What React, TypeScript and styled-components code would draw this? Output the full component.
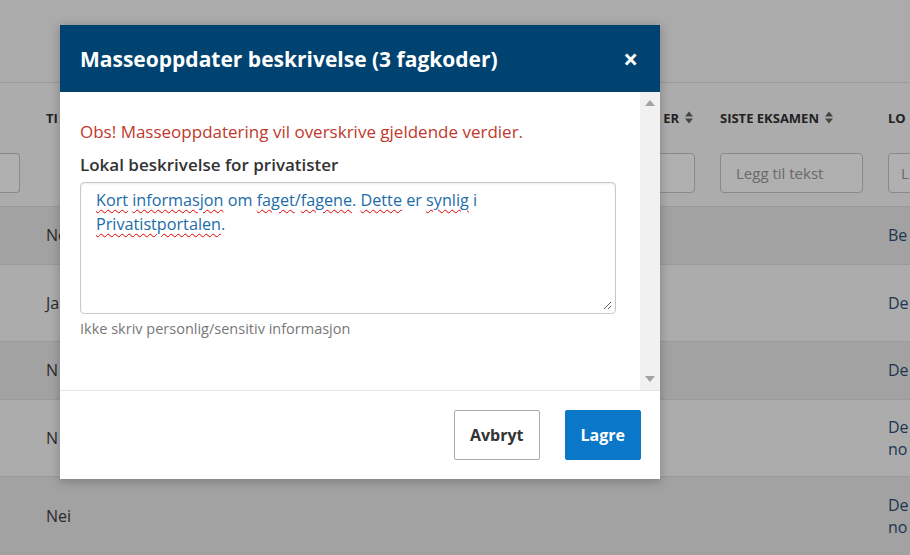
import React from "react";
import styled, { createGlobalStyle } from "styled-components";

const G = createGlobalStyle`
  html,body{margin:0;padding:0;background:#acacac;font-family:"Open Sans",sans-serif;}
  #root{width:910px;height:555px;overflow:hidden;position:relative;}
`;

const Page = styled.div`display:flex;flex-direction:column;width:910px;height:555px;`;
const Top = styled.div`height:82px;border-bottom:1px solid #9c9c9c;background:#ababab;`;
const Head = styled.div`height:123px;display:grid;grid-template-columns:45px 650px 25px 168px 1fr;grid-template-rows:70px 53px;`;
const HCell = styled.div<{ $pad?: number }>`
  font-size:13px;font-weight:700;color:#222;display:flex;align-items:center;padding-left:${p => p.$pad ?? 0}px;gap:6px;
`;
const FCell = styled.div<{ $end?: boolean }>`display:flex;align-items:flex-start;justify-content:${p => (p.$end ? "flex-end" : "flex-start")};`;
const Filter = styled.div<{ $w: number }>`
  width:${p => p.$w}px;height:40px;border:1px solid #8a8a8a;border-radius:4px;background:#b0b0b0;color:#6a6a6a;font-size:15px;font-weight:400;display:flex;align-items:center;padding-left:15px;box-sizing:border-box;white-space:nowrap;overflow:hidden;
`;
const Row = styled.div<{ $h: number; $dark: boolean }>`
  height:${p => p.$h}px;background:${p => (p.$dark ? "#a2a2a2" : "#acacac")};border-top:1px solid #9a9a9a;
  display:grid;grid-template-columns:45px 843px 1fr;align-items:center;font-size:16px;color:#2a2a2a;
`;
const Blue = styled.div`color:#1d3550;line-height:22px;`;

const Modal = styled.div`
  position:absolute;left:60px;top:25px;width:600px;height:454px;background:#fff;display:flex;flex-direction:column;
  box-shadow:0 2px 10px rgba(0,0,0,.25);
`;
const MHead = styled.div`
  height:67px;background:#004370;color:#fff;display:flex;align-items:center;justify-content:space-between;padding:0 22px 0 20px;
  font-size:21px;font-weight:700;
`;
const Close = styled.span`font-size:26px;font-weight:700;line-height:1;`;
const MBody = styled.div`flex:1;display:flex;border-bottom:1px solid #e5e5e5;`;
const Content = styled.div`flex:1;padding:28px 24px 0 20px;`;
const Scroll = styled.div`width:20px;background:#f1f1f1;display:flex;flex-direction:column;justify-content:space-between;align-items:center;padding:8px 0;box-sizing:border-box;`;
const Arrow = styled.div<{ $up: boolean }>`
  width:0;height:0;border-left:5px solid transparent;border-right:5px solid transparent;
  ${p => (p.$up ? "border-bottom:6px solid #a3a3a3;" : "border-top:6px solid #a3a3a3;")}
`;
const Warn = styled.div`color:#c0392b;font-size:17px;`;
const Label = styled.div`color:#333;font-size:17px;font-weight:600;margin-top:10px;`;
const Area = styled.div`
  margin-top:6px;height:132px;border:1px solid #c9c9c9;border-radius:4px;box-sizing:border-box;padding:5px 15px;position:relative;
  color:#1b6ca8;font-size:16.2px;line-height:24px;box-shadow:inset 0 1px 2px rgba(0,0,0,.08);
`;
const Sp = styled.span`text-decoration:underline wavy #e00000;text-decoration-thickness:1px;text-underline-offset:3px;`;
const Grip = styled.svg`position:absolute;right:3px;bottom:3px;`;
const Hint = styled.div`color:#777;font-size:14.5px;margin-top:5px;`;
const Foot = styled.div`height:88px;display:flex;justify-content:flex-end;align-items:center;gap:25px;padding-right:19px;`;
const Btn = styled.button<{ $primary?: boolean }>`
  height:50px;padding:0 15px;font-family:"Open Sans",sans-serif;font-size:16px;font-weight:700;border-radius:2px;
  ${p => (p.$primary ? "background:#0a77c9;color:#fff;border:1px solid #0a77c9;" : "background:#fff;color:#333;border:1px solid #aaa;")}
`;
const Sort = () => (
  <svg width="8" height="13" viewBox="0 0 8 13"><path d="M0 5.5L4 0.5 8 5.5Z M0 7.5L4 12.5 8 7.5Z" fill="#444" /></svg>
);

export default function App() {
  const rows: [number, boolean, string, string[]][] = [
    [58, true, "Nei", ["Be"]],
    [76, false, "Ja", ["De"]],
    [57, true, "N", ["De"]],
    [77, false, "N", ["De", "no"]],
    [78, true, "Nei", ["De", "no"]],
  ];
  return (
    <>
      <G />
      <Page>
        <Top />
        <Head>
          <HCell $pad={46}>TI</HCell>
          <HCell style={{ justifyContent: "flex-end", paddingRight: 2 }}>ER <Sort /></HCell>
          <HCell />
          <HCell>SISTE EKSAMEN <Sort /></HCell>
          <HCell>LO</HCell>
          <FCell><Filter $w={20} style={{ borderLeft: 0, borderRadius: "0 4px 4px 0" }} /></FCell>
          <FCell $end><Filter $w={60} /></FCell>
          <FCell />
          <FCell><Filter $w={143}>Legg til tekst</Filter></FCell>
          <FCell><Filter $w={40} style={{ paddingLeft: 12 }}>L</Filter></FCell>
        </Head>
        {rows.map(([h, d, a, b], i) => (
          <Row key={i} $h={h} $dark={d}>
            <div style={{ paddingLeft: 46 }}>{a}</div>
            <div />
            <Blue>{b.map(t => <div key={t}>{t}</div>)}</Blue>
          </Row>
        ))}
      </Page>
      <Modal>
        <MHead>Masseoppdater beskrivelse (3 fagkoder)<Close>×</Close></MHead>
        <MBody>
          <Content>
            <Warn>Obs! Masseoppdatering vil overskrive gjeldende verdier.</Warn>
            <Label>Lokal beskrivelse for privatister</Label>
            <Area>
              <Sp>Kort</Sp> <Sp>informasjon</Sp> om <Sp>faget</Sp>/<Sp>fagene</Sp>. <Sp>Dette</Sp> er <Sp>synlig</Sp> i{" "}
              <Sp>Privatistportalen</Sp>.
              <Grip width="10" height="10" viewBox="0 0 10 10"><path d="M9 2L2 9M9 6L6 9" stroke="#666" strokeWidth="1" /></Grip>
            </Area>
            <Hint>Ikke skriv personlig/sensitiv informasjon</Hint>
          </Content>
          <Scroll><Arrow $up /><Arrow $up={false} /></Scroll>
        </MBody>
        <Foot>
          <Btn>Avbryt</Btn>
          <Btn $primary>Lagre</Btn>
        </Foot>
      </Modal>
    </>
  );
}
